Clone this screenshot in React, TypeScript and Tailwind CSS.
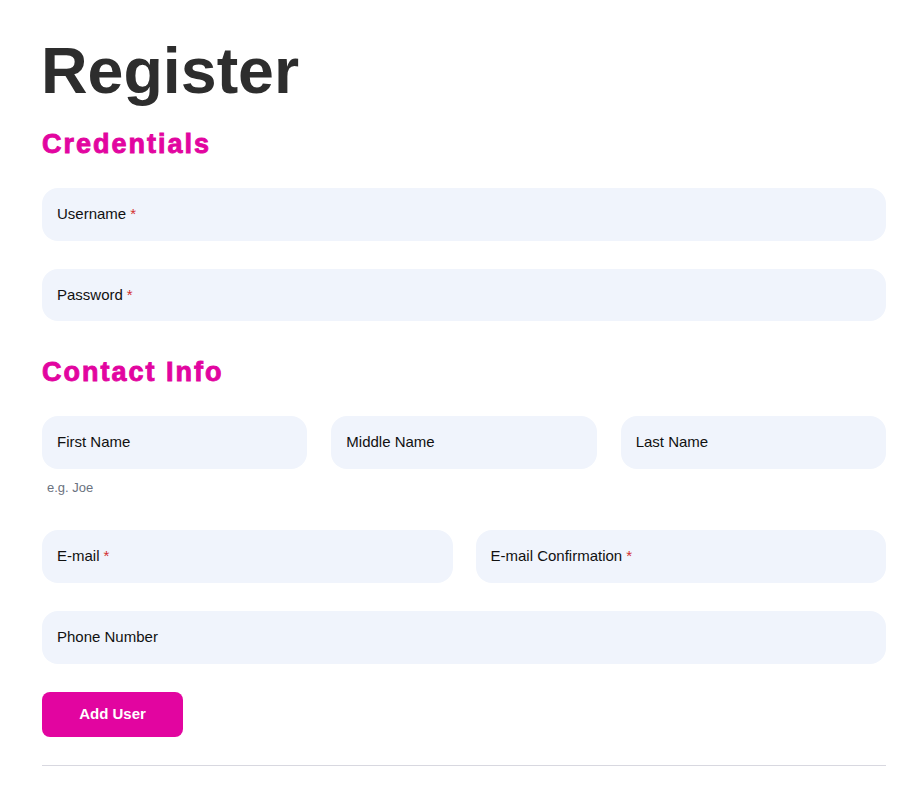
import React from 'react';

type FieldProps = { label: string; required?: boolean; hint?: string };

const Field: React.FC<FieldProps> = ({ label, required, hint }) => (
  <div className="flex flex-col flex-1 min-w-0">
    <label className="h-[52.5px] rounded-[16px] bg-[#f0f4fc] flex items-center pl-[15px] text-[15px] text-[#111111] cursor-text">
      <span>{label}</span>
      {required && <span className="ml-[4px] text-[#d32f2f]">*</span>}
    </label>
    {hint && <p className="mt-[12.5px] pl-[5px] text-[13px] leading-none text-[#6b7280]">{hint}</p>}
  </div>
);

const sectionTitle =
  'text-[27px] leading-none font-bold tracking-[2px] text-[#e205a0] [-webkit-text-stroke:0.9px_#e205a0]';

const App: React.FC = () => {
  return (
    <div className="min-h-screen bg-white font-['Liberation_Sans',Arial,sans-serif] pl-[42px] pr-[26px] pt-[39px]">
      <h1 className="text-[64.5px] leading-[64px] font-bold text-[#2d2d2d] -ml-[1px]">Register</h1>

      {/* 계정 정보 */}
      <h2 className={`mt-[28px] ${sectionTitle}`}>Credentials</h2>
      <div className="mt-[30px] flex flex-col gap-[28px]">
        <Field label="Username" required />
        <Field label="Password" required />
      </div>

      {/* 연락처 */}
      <h2 className={`mt-[37.5px] ${sectionTitle}`}>Contact Info</h2>
      <div className="mt-[30.5px] flex gap-[24px] items-start">
        <Field label="First Name" hint="e.g. Joe" />
        <Field label="Middle Name" />
        <Field label="Last Name" />
      </div>
      <div className="mt-[36px] flex gap-[23px]">
        <Field label="E-mail" required />
        <Field label="E-mail Confirmation" required />
      </div>
      <div className="mt-[28.5px] flex">
        <Field label="Phone Number" />
      </div>

      <button className="mt-[28.5px] w-[141px] h-[45px] rounded-[8px] bg-[#e205a0] text-white text-[15px] font-bold">
        Add User
      </button>

      <hr className="mt-[28px] border-t border-[#d8d8e0]" />
    </div>
  );
};

export default App;
